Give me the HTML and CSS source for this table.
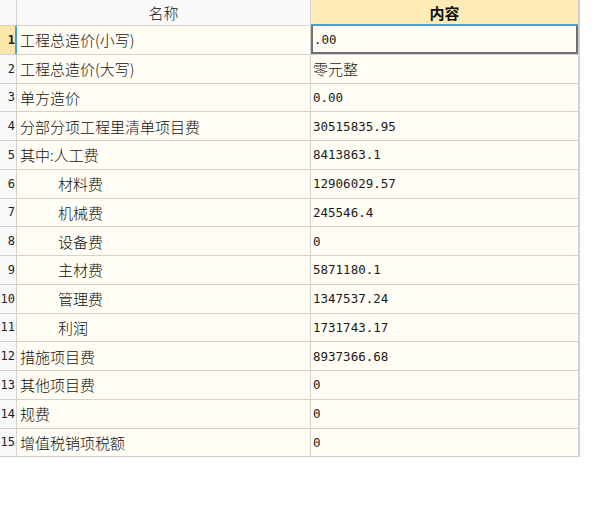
FILE: index.html
```html
<!DOCTYPE html>
<html lang="zh">
<head>
<meta charset="utf-8">
<title>工程造价</title>
<link rel="stylesheet" href="styles.css">
</head>
<body>
<div class="sheet">
  <div class="num hdr"></div>
  <div class="hname">名称</div>
  <div class="hcontent">内容</div>

  <div class="num active">1</div><div class="name">工程总造价(小写)</div><div class="val sel">.00</div>
  <div class="num">2</div><div class="name">工程总造价(大写)</div><div class="val cjk">零元整</div>
  <div class="num">3</div><div class="name">单方造价</div><div class="val">0.00</div>
  <div class="num">4</div><div class="name">分部分项工程里清单项目费</div><div class="val">30515835.95</div>
  <div class="num">5</div><div class="name">其中:人工费</div><div class="val">8413863.1</div>
  <div class="num">6</div><div class="name sub">材料费</div><div class="val">12906029.57</div>
  <div class="num">7</div><div class="name sub">机械费</div><div class="val">245546.4</div>
  <div class="num">8</div><div class="name sub">设备费</div><div class="val">0</div>
  <div class="num">9</div><div class="name sub">主材费</div><div class="val">5871180.1</div>
  <div class="num">10</div><div class="name sub">管理费</div><div class="val">1347537.24</div>
  <div class="num">11</div><div class="name sub">利润</div><div class="val">1731743.17</div>
  <div class="num">12</div><div class="name">措施项目费</div><div class="val">8937366.68</div>
  <div class="num">13</div><div class="name">其他项目费</div><div class="val">0</div>
  <div class="num">14</div><div class="name">规费</div><div class="val">0</div>
  <div class="num">15</div><div class="name">增值税销项税额</div><div class="val">0</div>
</div>
</body>
</html>
```
FILE: styles.css
```css
html, body {
  margin: 0;
  padding: 0;
  background: #ffffff;
}
.sheet {
  display: grid;
  grid-template-columns: 16px 293px 267px;
  grid-template-rows: 25px repeat(15, 27.75px);
  gap: 1px;
  width: 578px;
  background: #d2d2d2;
  border-right: 2px solid #cfcfcf;
  border-bottom: 1px solid #cfcfcf;
  font-family: "Noto Sans CJK SC", sans-serif;
  font-weight: 300;
  font-size: 15px;
  color: #111;
}
.num {
  background: #f8f8f8;
  font-family: "DejaVu Sans Mono", monospace;
  font-weight: normal;
  font-size: 12px;
  color: #222;
  display: flex;
  align-items: center;
  justify-content: flex-end;
  padding-right: 1px;
  overflow: hidden;
  white-space: nowrap;
}
.num.hdr {
  background: #fafafa;
}
.num.active {
  background: #fde6ad;
  font-weight: bold;
  box-shadow: 1px 0 0 #3ea4d6, inset -1px 0 0 #3ea4d6;
}
.hname {
  background: #fafafa;
  display: flex;
  align-items: center;
  justify-content: center;
  font-size: 15px;
}
.hcontent {
  background: #ffebb6;
  display: flex;
  align-items: center;
  justify-content: center;
  font-weight: bold;
  font-size: 15px;
  box-shadow: 0 1px 0 #3ea4d6, inset 0 -1px 0 #3ea4d6;
}
.name, .val {
  background: #fffdf4;
  display: flex;
  align-items: center;
  padding-left: 3px;
  white-space: nowrap;
  overflow: hidden;
}
.name.sub {
  padding-left: 41px;
}
.val {
  padding-left: 2px;
  font-family: "DejaVu Sans Mono", monospace;
  font-weight: normal;
  font-size: 12.5px;
  color: #1a1a1a;
}
.val.cjk {
  font-family: "Noto Sans CJK SC", sans-serif;
  font-weight: 300;
  font-size: 15px;
}
.val.sel {
  box-shadow: inset 2px 0 0 #707070, inset -2px 0 0 #707070, inset 0 -2px 0 #707070;
  padding-left: 3px;
}
```
